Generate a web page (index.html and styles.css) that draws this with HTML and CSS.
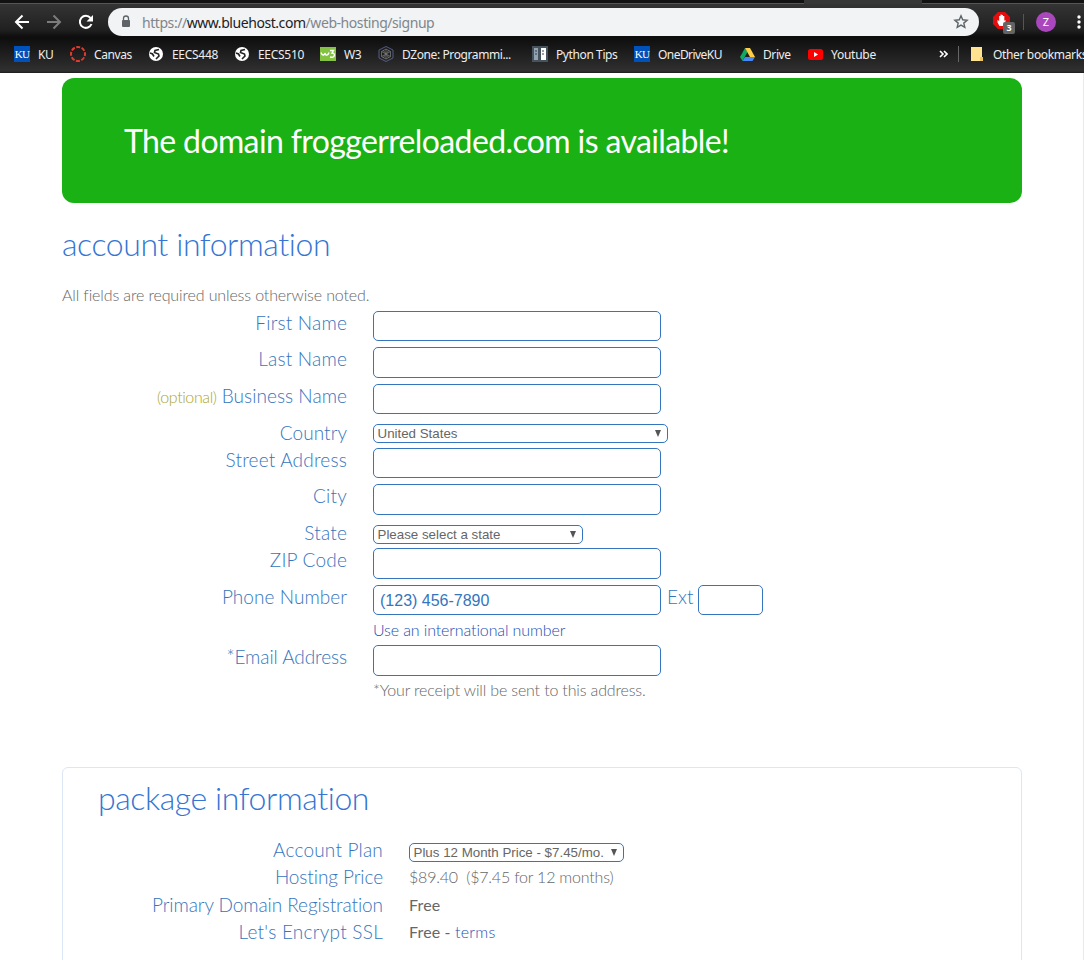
FILE: index.html
```html
<!DOCTYPE html>
<html lang="en">
<head>
<meta charset="utf-8">
<title>Bluehost signup</title>
<link rel="stylesheet" href="styles.css">
</head>
<body>
<header class="chrome">
  <div class="tabstrip"><span class="tab-active"></span></div>
  <div class="toolbar">
    <svg class="nav-icons" width="92" height="28" viewBox="0 0 92 28" fill="none" stroke="#fff" stroke-width="2">
      <path d="M21 14H8M14.500 7.500L8 14l6.500 6.500"/>
      <path stroke="#7c7c7c" d="M39 14h13M45.500 7.500L52 14l-6.500 6.500"/>
      <path d="M82.500 10a6 6 0 1 0 1 6"/><path fill="#fff" stroke="none" d="M85 7v6.500h-6.500z"/>
    </svg>
    <div class="omnibox">
      <svg width="10" height="14" viewBox="0 0 10 14"><path d="M2.500 6V3.500a2.500 2.500 0 0 1 5 0V6" fill="none" stroke="#5f6368" stroke-width="1.300"/><rect x="1" y="5" width="8" height="7" rx="1" fill="#5f6368"/></svg>
      <span class="url">https://<b>www.bluehost.com</b>/web-hosting/signup</span>
      <svg class="star" width="16" height="16" viewBox="0 0 16 16"><path d="M8 1.800l1.700 4 4.400.4-3.300 2.900 1 4.300L8 11.100l-3.800 2.300 1-4.300-3.300-2.900 4.400-.4z" fill="none" stroke="#5f6368" stroke-width="1.400"/></svg>
    </div>
    <div class="ext">
      <svg width="17" height="17" viewBox="0 0 17 17"><path d="M5 0h7l5 5v7l-5 5H5l-5-5V5z" fill="#e40d0d"/><path d="M4.500 8v2.500L6.500 14h4l2-4.500V8l-1.200.8V4H10V3H8.700V2.500H7.500V4H6.200v5z" fill="#fff"/></svg>
      <span class="count">3</span>
    </div>
    <span class="sep"></span>
    <span class="avatar">Z</span>
    <svg class="dots" width="4" height="14" viewBox="0 0 4 14" fill="#fff"><circle cx="2" cy="2" r="1.700"/><circle cx="2" cy="7" r="1.700"/><circle cx="2" cy="12" r="1.700"/></svg>
  </div>
  <nav class="bookmarks">
    <a class="bm bm-ku"><span class="ku">KU</span><span class="t">KU</span></a>
    <a class="bm bm-canvas"><svg width="16" height="16" viewBox="0 0 16 16"><circle cx="8" cy="8" r="7" fill="none" stroke="#e13b2f" stroke-width="2" stroke-dasharray="4 1.500" stroke-dashoffset="2"/></svg><span class="t">Canvas</span></a>
    <a class="bm bm-448"><svg width="14" height="14" viewBox="0 0 14 14"><circle cx="7" cy="7" r="7" fill="#fff"/><path d="M10 2.500L6 3.500 5.500 5.500l4 1.500.5 2-3 3M1 6l2.500 1L5 9.500" fill="none" stroke="#222" stroke-width="1.600"/></svg><span class="t">EECS448</span></a>
    <a class="bm bm-510"><svg width="14" height="14" viewBox="0 0 14 14"><circle cx="7" cy="7" r="7" fill="#fff"/><path d="M10 2.500L6 3.500 5.500 5.500l4 1.500.5 2-3 3M1 6l2.500 1L5 9.500" fill="none" stroke="#222" stroke-width="1.600"/></svg><span class="t">EECS510</span></a>
    <a class="bm bm-w3"><svg width="16" height="14" viewBox="0 0 16 14"><path fill="#83c341" d="M0 0h16v14H0z"/><path d="M1 5.500q1 3 2.500 2.500T5 6q.5 2.500 2 2T9 5.500M10 3.500h3.500L12 6q2.800 0 2.300 2.500T10 10" fill="none" stroke="#fff" stroke-width="1.400"/></svg><span class="t">W3</span></a>
    <a class="bm bm-dz"><svg width="16" height="16" viewBox="0 0 16 16" fill="none" stroke="#545c86"><path d="M8 .5l7 3.500v8l-7 3.500L1 12V4z"/><path stroke="#777" stroke-width=".8" d="M8 3l4.500 2.500v5L8 13l-4.500-2.500v-5zM3.500 5.500l9 5M12.500 5.500l-9 5M8 3v10M5 4l6 8M11 4l-6 8"/></svg><span class="t">DZone: Programmi...</span></a>
    <a class="bm bm-py"><svg width="16" height="16" viewBox="0 0 16 16"><path fill="#46535f" d="M0 0h16v16H0z"/><path fill="#93a2ae" d="M2 2h4v12H2z"/><path fill="#fff" d="M9 2h5v12H9z"/><path stroke="#34404b" d="M3 5h2M3 8h2M10 5h2M10 8h2"/></svg><span class="t">Python Tips</span></a>
    <a class="bm bm-one"><span class="ku">KU</span><span class="t">OneDriveKU</span></a>
    <a class="bm bm-drive"><svg width="15" height="13" viewBox="0 0 15 13"><path fill="#11a861" d="M5 0L0 9l2.500 4L7.500 4z"/><path fill="#ffcf44" d="M5 0h5l5 9h-5z"/><path fill="#4688f4" d="M5 9h10l-2.500 4h-10z"/></svg><span class="t">Drive</span></a>
    <a class="bm bm-yt"><svg width="15" height="11" viewBox="0 0 15 11"><rect width="15" height="11" rx="2.500" fill="#f00"/><path fill="#fff" d="M6 3l4 2.500L6 8z"/></svg><span class="t">Youtube</span></a>
    <svg class="more" width="9" height="8" viewBox="0 0 9 8" fill="none" stroke="#fff" stroke-width="1.600"><path d="M1 1l3 3-3 3M5 1l3 3-3 3"/></svg>
    <span class="bsep"></span>
    <a class="bm bm-other"><svg width="12" height="14" viewBox="0 0 12 14"><path fill="#ffe391" d="M0 0h11v10l1 1v3H0z"/><path fill="#efc75e" d="M9 10h3v4H9z"/></svg><span class="t">Other bookmarks</span></a>
  </nav>
</header>
<main class="page">
  <div class="banner"><span class="t">The domain froggerreloaded.com is available!</span></div>
  <h1 class="title account-title"><span class="t">account information</span></h1>
  <p class="note"><span class="t">All fields are required unless otherwise noted.</span></p>
  <form class="form">
    <div class="row r36"><label><span class="t">First Name</span></label><input class="field"></div>
    <div class="row r37"><label><span class="t">Last Name</span></label><input class="field tall"></div>
    <div class="row r37"><label class="snug"><small class="t">(optional)</small> <span class="t">Business Name</span></label><input class="field"></div>
    <div class="row r27"><label class="snug"><span class="t">Country</span></label><div class="select country"><span class="t">United States</span><i></i></div></div>
    <div class="row r36"><label><span class="t">Street Address</span></label><input class="field"></div>
    <div class="row r37"><label><span class="t">City</span></label><input class="field tall"></div>
    <div class="row r27"><label><span class="t">State</span></label><div class="select state"><span class="t">Please select a state</span><i></i></div></div>
    <div class="row r37"><label><span class="t">ZIP Code</span></label><input class="field tall"></div>
    <div class="row r36"><label class="snug"><span class="t">Phone Number</span></label><input class="field phone" placeholder="(123) 456-7890"><span class="ext-label t">Ext</span><input class="field short"></div>
    <div class="hint link"><span class="t">Use an international number</span></div>
    <div class="row r37"><label class="tight"><span class="t">*Email Address</span></label><input class="field tall"></div>
    <div class="hint receipt"><span class="t">*Your receipt will be sent to this address.</span></div>
  </form>
  <section class="package">
    <h2 class="title package-title"><span class="t">package information</span></h2>
    <div class="prow"><label><span class="t">Account Plan</span></label><div class="select plan"><span class="t">Plus 12 Month Price - $7.45/mo.</span><i></i></div></div>
    <div class="prow"><label class="tight"><span class="t">Hosting Price</span></label><span class="value price t">$89.40&nbsp; ($7.45 for 12 months)</span></div>
    <div class="prow"><label class="tight"><span class="t">Primary Domain Registration</span></label><span class="value free t">Free</span></div>
    <div class="prow"><label class="loose"><span class="t">Let's Encrypt SSL</span></label><span class="value free t">Free - <a>terms</a></span></div>
  </section>
</main>
</body>
</html>
```
FILE: styles.css
```css
*{box-sizing:border-box}
body{margin:0;height:960px;overflow:hidden;background:#fff;font-family:Lato,sans-serif;font-weight:300;font-variant-ligatures:none;color:#666}
.t{white-space:nowrap}
.chrome{height:73px;overflow:hidden;background:linear-gradient(#373737 0,#202020 30px,#0d0d0d 37px,#303030 71px,#1b1b1b 73px);font-family:"Noto Sans",sans-serif;font-weight:400}
.tabstrip{height:4px;background:#121212;border-bottom:1px solid #555;padding-left:804px}
.tab-active{display:block;width:118px;height:4px;background:#373737}
.toolbar{height:32px;display:flex;align-items:center;padding-top:4px}
.nav-icons{margin-left:8px;flex:none}
.omnibox{width:871px;height:28px;margin-left:8px;border-radius:14px;background:#f1f3f4;display:flex;align-items:center;padding:0 10px 0 13px;flex:none}
.url{font-size:14px;color:#80868b;margin-left:11px;letter-spacing:-.44px;white-space:nowrap}
.url b{font-weight:400;color:#202124}
.star{margin-left:auto}
.ext{position:relative;width:24px;height:20px;margin-left:14px;flex:none}
.ext svg{display:block}
.count{position:absolute;left:10px;top:10px;width:12px;height:12px;border-radius:2px;background:#646464;color:#fff;font-size:9px;line-height:12px;text-align:center;font-weight:700}
.sep{width:1px;height:16px;background:#555;margin-left:6px}
.avatar{width:20px;height:20px;border-radius:50%;background:#ab47bc;color:#fff;font-size:11px;line-height:20px;text-align:center;margin-left:12px;flex:none}
.dots{margin-left:21px;flex:none}
.bookmarks{height:36px;display:flex;align-items:center;color:#eee;font-size:12px;padding-left:14px;letter-spacing:-.4px}
.bm{display:flex;align-items:center;gap:8px;flex:none}
.bm-ku{width:56px}
.bm-canvas{width:79px}
.bm-448{width:86px;gap:9px;letter-spacing:-.3px}
.bm-510{width:85px;gap:9px;letter-spacing:-.3px}
.bm-w3{width:58px}
.bm-dz{width:154px}
.bm-py{width:102px}
.bm-one{width:106px;letter-spacing:-.55px}
.bm-drive{width:68px}
.bm-yt{width:131px;letter-spacing:-.25px}
.bm-other{gap:10px;letter-spacing:-.35px}
.ku{width:16px;height:16px;background:#0051ba;color:#fff;font:11px/16px "Liberation Serif",serif;text-align:center;letter-spacing:-.8px}
.more{flex:none}
.bsep{width:1px;height:16px;background:#666;margin:0 12px 0 10px;flex:none}
.page{padding:5px 61px 0 62px;border-right:1px solid #e9e9e9;height:887px}
.banner{height:125px;border-radius:12px;background:#19b113;color:#fff;padding-left:62px;font-size:32px;font-weight:400;line-height:126px;letter-spacing:-.62px}
.title{margin:0;font-weight:300;font-size:32px;line-height:40px;color:#3575d3;letter-spacing:-.42px}
.account-title{margin-top:21px}
.note{margin:21px 0 0;height:26px;font-size:16px;line-height:20px;letter-spacing:-.13px}
.row{display:flex;align-items:flex-start}
.r36{height:36px}.r37{height:37px}.r27{height:27px}
.row label,.prow label{width:285px;margin-right:26px;text-align:right;font-size:19px;line-height:24px;color:#3575bd;white-space:nowrap;flex:none;letter-spacing:.2px}
.row .snug,.prow .snug{letter-spacing:.05px}
.row .tight,.prow .tight{letter-spacing:-.08px}
.row small{font-size:16px;color:#aaa52c;letter-spacing:-.4px}
.field{appearance:none;width:288px;height:30px;margin:0;border:1px solid #3575bd;border-radius:5px;background:#fff;padding:2px 6px 0;font:16px "Liberation Sans",sans-serif;flex:none;outline:0}
.tall{height:31px}
.field::placeholder{color:#3575bd;opacity:1}
.ext-label{font-size:19px;line-height:24px;color:#3575bd;margin:0 5px 0 6px}
.short{width:65px}
.select{display:flex;align-items:center;justify-content:space-between;height:19px;border:1px solid #3575bd;border-radius:5px;padding:0 6px 0 4px;font:13.333px "Liberation Sans",sans-serif;color:#666;flex:none}
.select .t{margin-left:-.5px}
.select i{border:3.500px solid transparent;border-top:7px solid #555;border-bottom:0}
.country{width:295px}.state{width:210px}.plan{width:215px}
.row .select{margin-top:3px}
.row .state{margin-top:4px}
.hint{margin-left:311px;height:24px;font-size:16px;line-height:18px;letter-spacing:-.12px}
.receipt{line-height:16px;letter-spacing:-.16px}
.link,.free a{color:#1a4fb5}
.package{margin-top:61px;height:220px;border:1px solid #dbe7f4;border-radius:6px;padding:10px 0 0 35px}
.package-title{margin-bottom:20px}
.prow{display:flex;height:27.300px}
.prow .loose{letter-spacing:.25px}
.prow .select{margin-top:5px}
.value{font-size:16px;line-height:24px}
.price{letter-spacing:-.2px}
.free{font-weight:400;letter-spacing:.15px}.free a{font-weight:300;letter-spacing:.3px}
```
